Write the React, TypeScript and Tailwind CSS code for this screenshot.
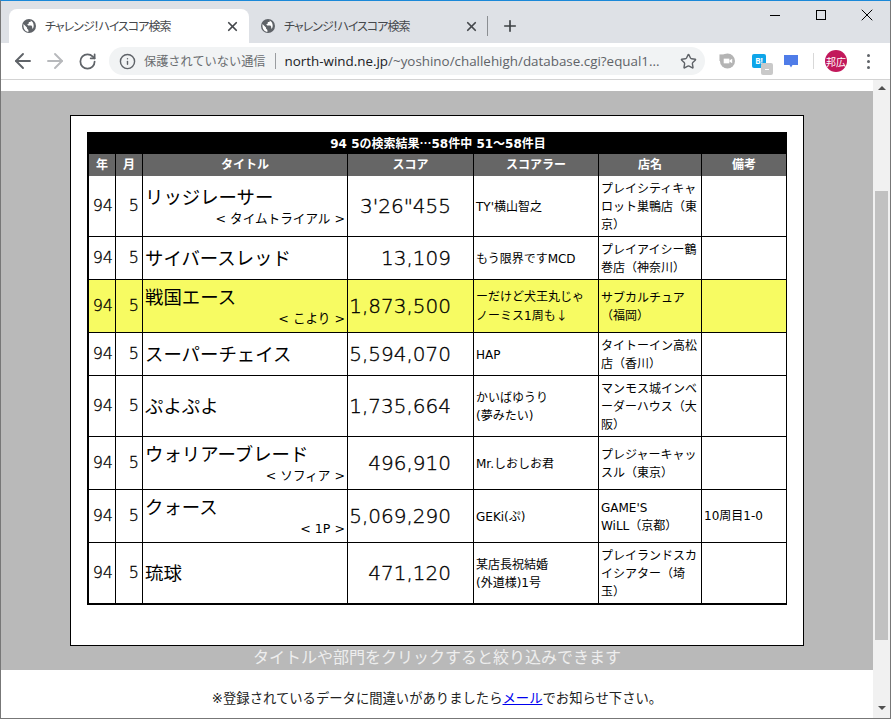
import type { ReactNode } from 'react'
import { ArrowLeft, ArrowRight, Info, Plus, RotateCw, Star, X } from 'lucide-react'

const font = { fontFamily: '"DejaVu Sans", "Noto Sans CJK JP", sans-serif' }
const cjk = { fontFamily: '"Noto Sans CJK JP", sans-serif' }

type Row = { title: string; sub?: string; score: string; player: ReactNode; shop: string; note?: string; h: string; hl?: boolean }

const rows: Row[] = [
  { title: 'リッジレーサー', sub: '< タイムトライアル >', score: `3'26"455`, player: "TY'横山智之", shop: 'プレイシティキャ\nロット巣鴨店（東\n京）', h: 'h-[61px]' },
  { title: 'サイバースレッド', score: '13,109', player: 'もう限界ですMCD', shop: 'プレイアイシー鶴\n巻店（神奈川）', h: 'h-[43px]' },
  { title: '戦国エース', sub: '< こより >', score: '1,873,500', player: <>ーだけど犬王丸じゃ{'\n'}ノーミス1周も<span style={cjk}>↓</span></>, shop: 'サブカルチュア\n（福岡）', h: 'h-[53px]', hl: true },
  { title: 'スーパーチェイス', score: '5,594,070', player: 'HAP', shop: 'タイトーイン高松\n店（香川）', h: 'h-[43px]' },
  { title: 'ぷよぷよ', score: '1,735,664', player: 'かいばゆうり\n(夢みたい)', shop: 'マンモス城インベ\nーダーハウス（大\n阪）', h: 'h-[61px]' },
  { title: 'ウォリアーブレード', sub: '< ソフィア >', score: '496,910', player: 'Mr.しおしお君', shop: 'プレジャーキャッ\nスル（東京）', h: 'h-[53px]' },
  { title: 'クォース', sub: '< 1P >', score: '5,069,290', player: 'GEKi(ぷ)', shop: "GAME'S\nWiLL（京都）", note: '10周目1-0', h: 'h-[53px]' },
  { title: '琉球', score: '471,120', player: '某店長祝結婚\n(外道様)1号', shop: 'プレイランドスカ\nイシアター（埼\n玉）', h: 'h-[61px]' },
]

const heads = ['年', '月', 'タイトル', 'スコア', 'スコアラー', '店名', '備考']

function GlobeIcon() {
  return (
    <svg width="14" height="14" viewBox="0 0 14 14" className="shrink-0">
      <circle cx="7" cy="7" r="7" fill="#5f6368" />
      <path d="M1.5 5 L5 8.6 L5 9.6 L6.4 11 L6.4 13 C3.6 12.8 0.9 10 1.5 5Z" fill="#fff" />
      <path d="M8.6 1.6 L8.6 3 L6.8 3 L6.8 4.6 L5.2 5.4 L6.2 6.6 L9.4 6.6 L10.2 7.8 L10.2 9.4 L11 9.4 C12.4 7.2 11.8 3.2 8.6 1.6Z" fill="#fff" />
    </svg>
  )
}

function Tab({ active }: { active?: boolean }) {
  return (
    <div className={active ? 'flex h-[34px] w-[240px] items-center rounded-t-[8px] bg-white pl-[13px]' : 'flex h-[34px] w-[238px] items-center pl-[12px]'}>
      <GlobeIcon />
      <span className="ml-[9px] w-[180px] whitespace-nowrap text-[12px] tracking-[-1px] text-[#45484c] [font-feature-settings:'palt']" style={cjk}>チャレンジ！ハイスコア検索</span>
      <X size={15} strokeWidth={2.8} className="text-[#45484c]" />
    </div>
  )
}

function TabStrip() {
  return (
    <div className="flex h-[42px] items-end bg-[#dee1e6] pl-[8px]">
      <Tab active />
      <Tab />
      <div className="mb-[7px] h-[20px] w-px bg-[#8b8e92]" />
      <Plus size={18} strokeWidth={2.2} className="mb-[8px] ml-[13px] text-[#3c4043]" />
      <div className="ml-auto flex h-full items-start pr-[13px] pt-[9px]">
        <div className="mt-[5px] h-px w-[10px] bg-black" />
        <div className="ml-[36px] h-[10px] w-[10px] border border-black" />
        <X size={20} strokeWidth={1.2} className="-mt-[5px] ml-[31px] text-black" />
      </div>
    </div>
  )
}

function Toolbar() {
  return (
    <div className="flex h-[37px] items-center border-b border-[#d3d3d3] bg-white pl-[10px]">
      <ArrowLeft size={24} strokeWidth={1.9} className="text-[#5f6368]" />
      <ArrowRight size={24} strokeWidth={1.9} className="ml-[8px] text-[#b7b9bc]" />
      <RotateCw size={19} strokeWidth={2.2} className="ml-[11px] text-[#5f6368]" />
      <div className="ml-[12px] flex h-[28px] w-[596px] items-center rounded-[14px] bg-[#f1f3f4] pl-[10px]">
        <Info size={17} strokeWidth={2} className="text-[#5f6368]" />
        <span className="ml-[8px] text-[12.2px] text-[#6a6d70]" style={cjk}>保護されていない通信</span>
        <div className="ml-[9px] h-[16px] w-px bg-[#9a9da0]" />
        <span className="ml-[9px] w-[395px] text-[13.4px] text-[#5f6368]" style={{ fontFamily: '"Open Sans", sans-serif' }}>
          <span className="text-[#202124]">north-wind.ne.jp</span>/~yoshino/challehigh/database.cgi?equal1...
        </span>
        <Star size={17} strokeWidth={2} className="text-[#5f6368]" />
      </div>
      <svg width="16" height="16" viewBox="0 0 17 16" className="ml-[14px]">
        <circle cx="9" cy="8" r="8" fill="#b4b4b4" />
        <path d="M0.5 1 H9 V8 H0.5Z" fill="#b4b4b4" />
        <rect x="5" y="5.5" width="6" height="5" fill="#fff" />
        <path d="M11 7.5 L14 5.5 V10.5 L11 8.5Z" fill="#fff" />
      </svg>
      <div className="relative ml-[17px] flex h-[14px] w-[14px] items-center justify-center rounded-[2px] bg-[#0ea5e9] text-[8px] font-bold leading-none text-white">
        B!
        <div className="absolute -bottom-[7px] -right-[7px] flex h-[12px] w-[12px] items-center justify-center rounded-[2px] bg-[#c9c9c9]">
          <div className="h-px w-[4px] bg-white" />
        </div>
      </div>
      <svg width="14" height="13" viewBox="0 0 14 13" className="ml-[18px]">
        <path d="M0 0 H14 V10 H8.5 L7 12.5 L5.5 10 H0Z" fill="#4f7ce8" />
      </svg>
      <div className="ml-[15px] h-[16px] w-px bg-[#d8d8d8]" />
      <div className="ml-[11px] flex h-[22px] w-[22px] items-center justify-center rounded-full bg-[#c2185b] text-[10px] text-white" style={cjk}>邦広</div>
      <div className="ml-[20px] flex flex-col gap-[3px]">
        <div className="h-[3px] w-[3px] rounded-full bg-[#5f6368]" />
        <div className="h-[3px] w-[3px] rounded-full bg-[#5f6368]" />
        <div className="h-[3px] w-[3px] rounded-full bg-[#5f6368]" />
      </div>
    </div>
  )
}

function ScoreTable() {
  return (
    <table className="w-[700px] table-fixed border-separate border-spacing-0 border-b border-l-2 border-black text-black" style={font}>
      <colgroup>
        <col className="w-[27px]" />
        <col className="w-[27px]" />
        <col className="w-[205px]" />
        <col className="w-[126px]" />
        <col className="w-[125px]" />
        <col className="w-[103px]" />
        <col className="w-[85px]" />
      </colgroup>
      <thead>
        <tr className="h-[22px]">
          <th colSpan={7} className="bg-black p-0 text-center text-[12px] font-bold text-white">94 5の検索結果<span style={cjk}>…</span>58件中 51〜58件目</th>
        </tr>
        <tr className="h-[22px]">
          {heads.map((head) => (
            <th key={head} className="border-r border-black bg-[#666666] p-0 text-center text-[12px] font-bold text-white">{head}</th>
          ))}
        </tr>
      </thead>
      <tbody>
        {rows.map((row) => (
          <tr key={row.title} className={row.h + (row.hl ? ' bg-[#f7fb62]' : '')}>
            <td className="border-r border-b border-black p-0 pr-[2px] text-right text-[16px] font-extralight [-webkit-text-stroke:0.3px_#000]">94</td>
            <td className="border-r border-b border-black p-0 pr-[3px] text-right text-[16px] font-extralight [-webkit-text-stroke:0.3px_#000]">5</td>
            <td className="border-r border-b border-black p-0 pl-[2px] pr-[2px]">
              <div className="mb-[2px] text-[18.4px] leading-[24px]" style={cjk}>{row.title}</div>
              {row.sub && <div className="text-right text-[12.6px] leading-[18px]">{row.sub}</div>}
            </td>
            <td className="border-r border-b border-black p-0 pr-[22px] text-right text-[20px] font-extralight [-webkit-text-stroke:0.35px_#000]">{row.score}</td>
            <td className="whitespace-pre-line border-r border-b border-black p-0 pl-[2px] pt-[1px] text-[12px] leading-[18px]">{row.player}</td>
            <td className="whitespace-pre-line border-r border-b border-black p-0 pl-[2px] pt-[1px] text-[12px] leading-[18px]">{row.shop}</td>
            <td className="border-r border-b border-black p-0 pl-[2px] text-[12px]">{row.note}</td>
          </tr>
        ))}
      </tbody>
    </table>
  )
}

function Scrollbar() {
  return (
    <div className="relative flex w-[17px] shrink-0 flex-col items-center bg-[#f1f1f1]">
      <div className="mt-[6px] h-0 w-0 border-x-[4px] border-b-[4px] border-x-transparent border-b-[#505050]" />
      <div className="mt-[101px] h-[449px] w-[13px] bg-[#c1c1c1]" />
      <div className="mt-[66px] h-0 w-0 border-x-[4px] border-t-[4px] border-x-transparent border-t-[#505050]" />
    </div>
  )
}

export default function App() {
  return (
    <div className="flex h-[719px] w-[891px] flex-col overflow-hidden border-x border-b border-[#777777] border-t-[#1a88d8] bg-white" style={{ borderTopWidth: 1 }}>
      <TabStrip />
      <Toolbar />
      <div className="flex min-h-0 flex-1">
        <div className="min-w-0 flex-1" style={font}>
          <div className="h-[11px] bg-white" />
          <div className="flex flex-col items-center bg-[#b9b9b9] pt-[24px]">
            <div className="w-[734px] border border-black bg-white pb-[40px] pl-[16px] pt-[16px]">
              <ScoreTable />
            </div>
            <div className="h-[24px] text-center text-[16px] leading-[24px] text-[#eeeeee]">タイトルや部門をクリックすると絞り込みできます</div>
          </div>
          <div className="pt-[20px] text-center text-[13.33px] leading-[18px] text-[#222222]">
            ※登録されているデータに間違いがありましたら<span className="text-[#0000ee] underline">メール</span>でお知らせ下さい。
          </div>
        </div>
        <Scrollbar />
      </div>
    </div>
  )
}
